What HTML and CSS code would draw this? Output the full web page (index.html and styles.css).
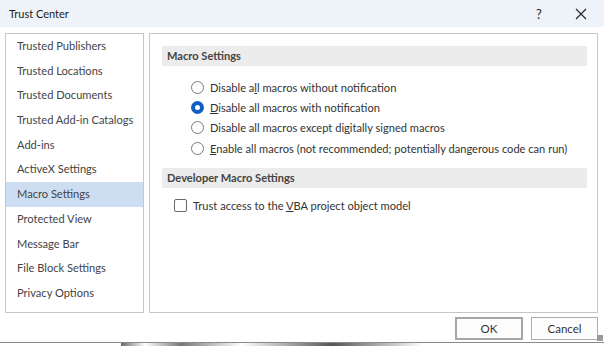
FILE: index.html
```html
<!DOCTYPE html>
<html lang="en">
<head>
    <meta charset="UTF-8">
    <title>Trust Center</title>
    <link rel="stylesheet" href="styles.css">
</head>
<body>
    <div class="dialog">
        <div class="titlebar">
            <span class="title">Trust Center</span>
            <span class="tb-btn help">?</span>
            <span class="tb-btn close">
                <svg width="12" height="12" viewBox="0 0 12 12"><path d="M1 1 L11 11 M11 1 L1 11" stroke="#222" stroke-width="1.1" fill="none"/></svg>
            </span>
        </div>

        <div class="main">
            <!-- left navigation -->
            <ul class="nav">
                <li>Trusted Publishers</li>
                <li>Trusted Locations</li>
                <li>Trusted Documents</li>
                <li>Trusted Add-in Catalogs</li>
                <li>Add-ins</li>
                <li>ActiveX Settings</li>
                <li class="active">Macro Settings</li>
                <li>Protected View</li>
                <li>Message Bar</li>
                <li>File Block Settings</li>
                <li>Privacy Options</li>
            </ul>

            <!-- settings pane -->
            <div class="pane">
                <div class="section-head">Macro Settings</div>
                <div class="options">
                    <label class="opt"><span class="radio"></span><span>Disable a<u>l</u>l macros without notification</span></label>
                    <label class="opt"><span class="radio checked"></span><span><u>D</u>isable all macros with notification</span></label>
                    <label class="opt"><span class="radio"></span><span>Disable all macros except di<u>g</u>itally signed macros</span></label>
                    <label class="opt"><span class="radio"></span><span><u>E</u>nable all macros (not recommended; potentially dangerous code can run)</span></label>
                </div>

                <div class="section-head dev">Developer Macro Settings</div>
                <label class="check-row"><span class="checkbox"></span><span>Trust access to the <u>V</u>BA project object model</span></label>
            </div>
        </div>

        <div class="footer">
            <button class="btn ok">OK</button>
            <button class="btn">Cancel</button>
            <span class="grip"></span>
        </div>
    </div>
    <div class="behind"></div>
</body>
</html>
```

FILE: styles.css
```css
* {
    box-sizing: border-box;
}

body {
    margin: 0;
    width: 604px;
    height: 346px;
    overflow: hidden;
    background-color: #fff;
    font-family: Lato, "Noto Sans", sans-serif;
    font-size: 11.1px;
    color: #333;
}

.dialog {
    height: 343px;
    border-bottom: 1px solid #8a8a8a;
    position: relative;
}

.titlebar {
    height: 27px;
    display: flex;
    align-items: center;
    background-color: #eef3f9;
    padding-left: 9px;
}

.title {
    flex: 1;
    font-size: 11px;
    color: #1a1a1a;
}

.tb-btn {
    width: 40px;
    text-align: center;
    color: #222;
}

.help {
    font-size: 13px;
    margin-right: 2px;
}

.close {
    display: flex;
    justify-content: center;
    margin-right: 3px;
}

.main {
    display: flex;
    gap: 5px;
    padding: 6px 6px 0 5px;
}

.nav {
    list-style: none;
    margin: 0;
    padding: 0;
    width: 139px;
    height: 280px;
    border: 1px solid #c6c6c6;
}

.nav li {
    height: 24.7px;
    line-height: 24.7px;
    padding-left: 11px;
    color: #444;
    white-space: nowrap;
}

.nav li.active {
    background-color: #cdddf2;
}

.pane {
    width: 449px;
    min-width: 0;
    height: 280px;
    border: 1px solid #c6c6c6;
    padding: 12px 10px 0 12px;
}

.section-head {
    height: 20px;
    line-height: 20px;
    background-color: #ececec;
    padding-left: 5px;
    font-weight: bold;
    color: #444;
}

.section-head.dev {
    margin-top: 10px;
}

.options {
    display: flex;
    flex-direction: column;
    padding: 11px 0 0 29px;
}

.opt {
    display: flex;
    align-items: center;
    height: 20.3px;
    white-space: nowrap;
}

.radio {
    flex: none;
    width: 13px;
    height: 13px;
    border: 1px solid #7a7a7a;
    border-radius: 50%;
    margin-right: 6px;
}

.radio.checked {
    border: 4px solid #0f5fc2;
    background-color: #fff;
}

.check-row {
    display: flex;
    align-items: center;
    height: 20px;
    margin: 7px 0 0 12px;
}

.checkbox {
    flex: none;
    width: 13px;
    height: 13px;
    border: 1px solid #6a6a6a;
    border-radius: 2px;
    margin-right: 6px;
}

.footer {
    display: flex;
    justify-content: flex-end;
    gap: 8px;
    padding: 4px 6px 0 0;
}

.btn {
    height: 23px;
    width: 67px;
    font-family: inherit;
    font-size: 11.5px;
    color: #333;
    background-color: #fdfdfd;
    border: 1px solid #adadad;
    padding: 0;
}

.btn.ok {
    width: 68px;
    border: 2px solid #a6a6a6;
}

.grip {
    position: absolute;
    right: 1px;
    bottom: 1px;
    width: 6px;
    height: 6px;
    background-image: radial-gradient(#9a9a9a 0.8px, transparent 1px);
    background-size: 2px 2px;
}

.behind {
    height: 3px;
    background: linear-gradient(90deg, #fff 0, #fff 20%, #666 20%, #fff 24%, #777 30%, #fff 40%, #555 55%, #fff 70%);
}
```
